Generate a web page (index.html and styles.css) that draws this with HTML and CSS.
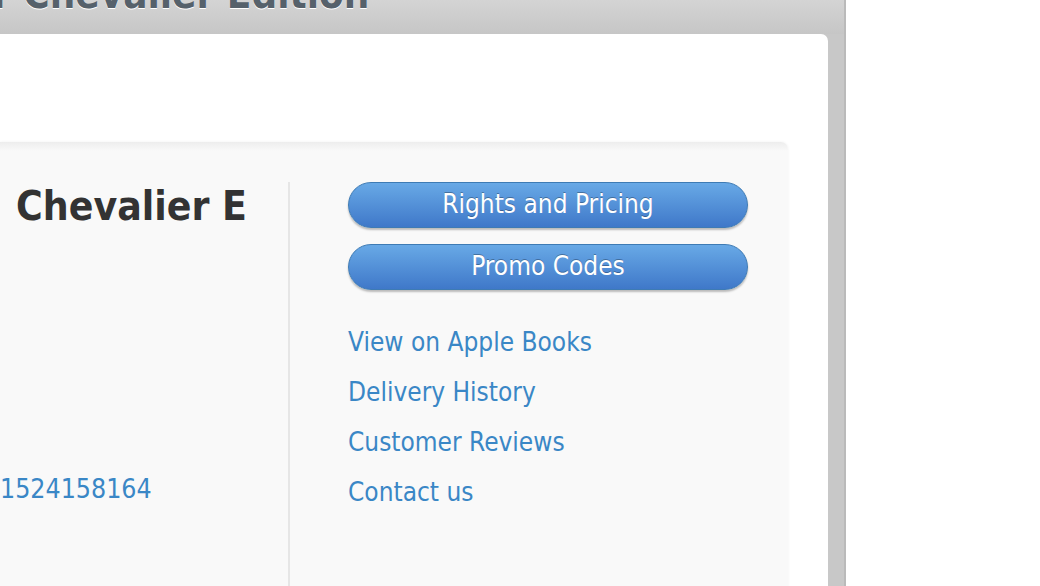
FILE: index.html
```html
<!DOCTYPE html>
<html lang="en">
<head>
<meta charset="utf-8">
<title>Book Details</title>
<link rel="stylesheet" href="styles.css">
</head>
<body>
<div class="page">
  <div class="window">
    <header class="header">
      <h1 class="title">r Chevalier Edition</h1>
    </header>
    <div class="card">
      <div class="panel">
        <div class="info">
          <h2 class="book-title">Chevalier E</h2>
          <a class="apple-id" href="#">1524158164</a>
        </div>
        <div class="divider"></div>
        <div class="actions">
          <a class="btn" href="#">Rights and Pricing</a>
          <a class="btn" href="#">Promo Codes</a>
          <ul class="links">
            <li><a href="#">View on Apple Books</a></li>
            <li><a href="#">Delivery History</a></li>
            <li><a href="#">Customer Reviews</a></li>
            <li><a href="#">Contact us</a></li>
          </ul>
        </div>
      </div>
    </div>
  </div>
</div>
</body>
</html>
```

FILE: styles.css
```css
html, body {
  margin: 0;
  padding: 0;
  background: #ffffff;
  height: 100%;
  overflow: hidden;
}

body {
  font-family: "DejaVu Sans Condensed", "DejaVu Sans", sans-serif;
  font-stretch: condensed;
}

.page {
  display: flex;
  height: 586px;
}

.window {
  width: 844px;
  height: 586px;
  background: #c8c8c8;
  border-right: 2px solid #bababa;
  display: flex;
  flex-direction: column;
  overflow: hidden;
}

.header {
  height: 34px;
  flex: none;
  background: linear-gradient(#d4d4d4, #c6c6c6);
  overflow: hidden;
}

.title {
  margin: -24px 0 0 -7px;
  font-size: 40px;
  line-height: 36px;
  font-weight: bold;
  color: #56616b;
  text-shadow: 0 1px 0 #ffffff;
  white-space: nowrap;
}

.card {
  flex: 1;
  margin-right: 16px;
  background: #ffffff;
  border-top-right-radius: 7px;
  padding: 108px 40px 0 0;
  display: flex;
}

.panel {
  flex: 1;
  display: flex;
  align-items: flex-start;
  background: linear-gradient(#ededed, #f9f9f9 9px);
  border-top-right-radius: 7px;
  box-shadow: 0 0 3px rgba(0, 0, 0, 0.06);
  padding: 40px 40px 0 0;
}

.info {
  width: 250px;
  flex: none;
  display: flex;
  flex-direction: column;
}

.book-title {
  margin: 0 0 0 16px;
  font-size: 40.5px;
  line-height: 48px;
  font-weight: bold;
  color: #333333;
  white-space: nowrap;
}

.apple-id {
  margin-top: 244px;
  font-size: 26.5px;
  line-height: 30px;
  color: #3a87c6;
  text-decoration: none;
  white-space: nowrap;
}

.divider {
  flex: none;
  width: 2px;
  height: 420px;
  margin-left: 38px;
  background: #e6e6e6;
}

.actions {
  flex: 1;
  display: flex;
  flex-direction: column;
  gap: 16px;
  padding-left: 58px;
}

.btn {
  display: flex;
  align-items: center;
  justify-content: center;
  box-sizing: border-box;
  height: 46px;
  padding-bottom: 2px;
  border: 1px solid #3e7bb4;
  border-radius: 23px;
  background: linear-gradient(#68a9e6, #3f78c9);
  box-shadow: 0 2px 2px rgba(0, 0, 0, 0.25);
  color: #ffffff;
  font-size: 26px;
  text-decoration: none;
  text-shadow: 0 -1px 0 rgba(0, 0, 0, 0.3);
}

.links {
  list-style: none;
  margin: 11px 0 0;
  padding: 0;
}

.links li {
  line-height: 50px;
  font-size: 26px;
}

.links a {
  color: #3a87c6;
  text-decoration: none;
}
```
